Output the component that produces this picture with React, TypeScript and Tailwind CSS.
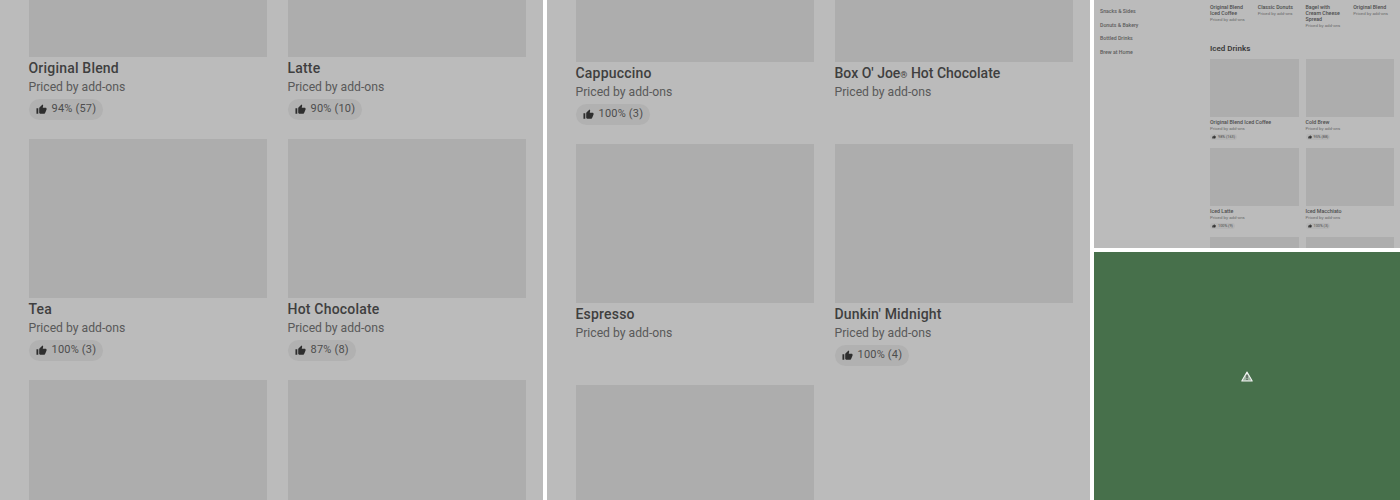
import type { ReactNode } from "react";
import { MdThumbUp } from "react-icons/md";

type Item = { name: ReactNode; rating?: string };

const leftItems: Item[] = [
  { name: "Original Blend", rating: "94% (57)" },
  { name: "Latte", rating: "90% (10)" },
  { name: "Tea", rating: "100% (3)" },
  { name: "Hot Chocolate", rating: "87% (8)" },
  { name: "" },
  { name: "" },
];

const middleItems: Item[] = [
  { name: "Cappuccino", rating: "100% (3)" },
  {
    name: (
      <span className="tracking-normal">
        Box O' Joe<span className="text-[9px] leading-none">®</span> Hot Chocolate
      </span>
    ),
  },
  { name: "Espresso" },
  { name: "Dunkin' Midnight", rating: "100% (4)" },
  { name: "" },
];

const icedItems: Item[] = [
  { name: "Original Blend Iced Coffee", rating: "98% (163)" },
  { name: "Cold Brew", rating: "95% (88)" },
  { name: "Iced Latte", rating: "100% (9)" },
  { name: "Iced Macchiato", rating: "100% (3)" },
  { name: "" },
  { name: "" },
];

const topItems = ["Original Blend Iced Coffee", "Classic Donuts", "Bagel with Cream Cheese Spread", "Original Blend"];
const sideLinks = ["Snacks & Sides", "Donuts & Bakery", "Bottled Drinks", "Brew at Home"];

function MenuCard({ item }: { item: Item }) {
  return (
    <div className="h-[220px]">
      <div className="h-[158.5px] bg-[#adadad]" />
      {item.name && (
        <>
          <p className="mt-[1px] h-[20px] text-[14px] leading-[20px] font-medium tracking-[0.2px] text-[#3f3f3f]">{item.name}</p>
          <p className="mt-[0.5px] text-[12.2px] leading-[18px] text-[#595959]">Priced by add-ons</p>
          {item.rating && (
            <div className="mt-[2.5px] flex h-[21px] w-fit items-center gap-[5px] rounded-full bg-[#b1b1b1] px-[7px] text-[11px] tracking-[0.2px] text-[#4d4d4d]">
              <MdThumbUp className="size-[11px] text-[#2e2e2e]" />
              {item.rating}
            </div>
          )}
        </>
      )}
    </div>
  );
}

function TinyCard({ item }: { item: Item }) {
  return (
    <div className="h-[82px]">
      <div className="h-[58px] bg-[#adadad]" />
      {item.name && (
        <>
          <p className="mt-[2px] text-[5.25px] leading-[6px] font-medium text-[#4d4d4d]">{item.name}</p>
          <p className="mt-[1px] text-[4.4px] leading-[6px] text-[#6b6b6b]">Priced by add-ons</p>
          {item.rating && (
            <div className="mt-[2px] flex h-[6px] w-fit items-center gap-[2px] rounded-full bg-[#b4b4b4] px-[2px] text-[3.8px] text-[#4d4d4d]">
              <MdThumbUp className="size-[4px] text-[#2e2e2e]" />
              {item.rating}
            </div>
          )}
        </>
      )}
    </div>
  );
}

export default function App() {
  return (
    <div className="grid h-[500px] w-[1400px] grid-cols-[543px_543px_306px] gap-[4px] overflow-hidden bg-white font-['Roboto',sans-serif]">
      <div className="overflow-hidden bg-[#bbbbbb] pl-[28.5px] pr-[17px]">
        <div className="-mt-[102px] grid grid-cols-2 gap-x-[20.5px] gap-y-[21px]">
          {leftItems.map((item, i) => (
            <MenuCard key={i} item={item} />
          ))}
        </div>
      </div>

      <div className="overflow-hidden bg-[#bbbbbb] pl-[28.5px] pr-[17px]">
        <div className="-mt-[97px] grid grid-cols-2 gap-x-[20.5px] gap-y-[21px]">
          {middleItems.map((item, i) => (
            <MenuCard key={i} item={item} />
          ))}
        </div>
      </div>

      <div className="grid grid-rows-[248px_248px] gap-[4px]">
        <div className="flex overflow-hidden bg-[#bbbbbb]">
          <div className="flex w-[116px] flex-col gap-[7.6px] pl-[6px] pt-[8px] text-[5.2px] leading-[6px] font-medium text-[#5c5c5c]">
            {sideLinks.map((link) => (
              <span key={link}>{link}</span>
            ))}
          </div>
          <div className="w-[184px]">
            <div className="grid grid-cols-4 gap-x-[7px] pt-[4px]">
              {topItems.map((name) => (
                <div key={name}>
                  <p className="max-w-[36px] text-[5.25px] leading-[6px] font-medium text-[#4d4d4d]">{name}</p>
                  <p className="mt-[1px] text-[4.4px] leading-[6px] text-[#6b6b6b]">Priced by add-ons</p>
                </div>
              ))}
            </div>
            <h3 className="mt-[15px] text-[8px] leading-[10px] font-semibold text-[#3a3a3a]">Iced Drinks</h3>
            <div className="mt-[5px] grid grid-cols-2 gap-x-[7px] gap-y-[7px]">
              {icedItems.map((item, i) => (
                <TinyCard key={i} item={item} />
              ))}
            </div>
          </div>
        </div>

        <div className="flex items-center justify-center bg-[#47704b]">
          <svg width="12" height="11" viewBox="0 0 12 11" fill="none">
            <path d="M6 1 L11.2 10 H0.8 Z" stroke="#f2f2f2" strokeWidth="1.1" strokeLinejoin="round" fill="#9db3a0" />
            <path d="M6 4 V7.3 M6 8.1 V9" stroke="#333" strokeWidth="1" />
          </svg>
        </div>
      </div>
    </div>
  );
}
